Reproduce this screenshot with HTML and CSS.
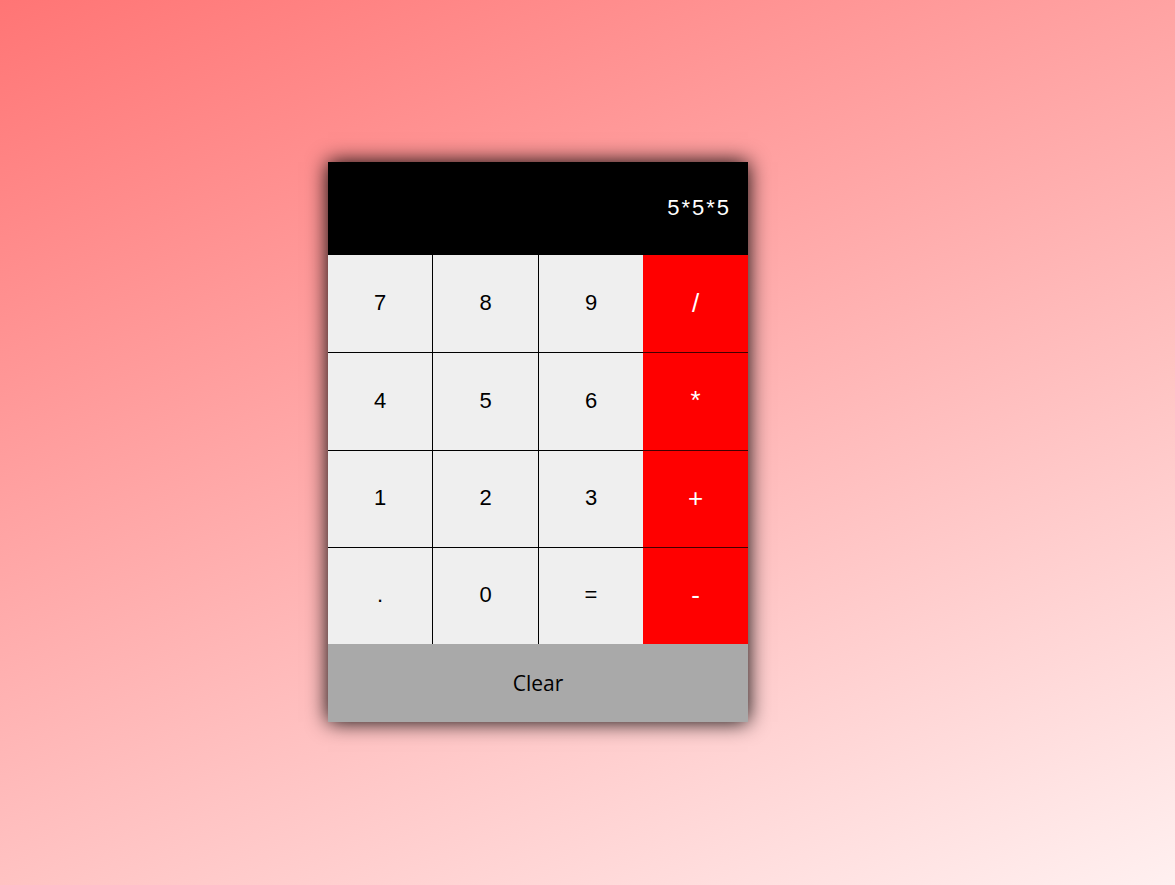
FILE: index.html
```html
<!DOCTYPE html>
<html lang="en">
<head>
<meta charset="utf-8">
<meta name="viewport" content="width=device-width, initial-scale=1">
<title>Calculator</title>
<link rel="stylesheet" href="styles.css">
</head>
<body>
<main class="calculator">
  <input class="display" type="text" value="5*5*5" aria-label="Expression" readonly>
  <div class="keys">
    <button class="key" type="button">7</button>
    <button class="key" type="button">8</button>
    <button class="key" type="button">9</button>
    <button class="key operator" type="button">/</button>
    <button class="key" type="button">4</button>
    <button class="key" type="button">5</button>
    <button class="key" type="button">6</button>
    <button class="key operator" type="button">*</button>
    <button class="key" type="button">1</button>
    <button class="key" type="button">2</button>
    <button class="key" type="button">3</button>
    <button class="key operator" type="button">+</button>
    <button class="key" type="button">.</button>
    <button class="key" type="button">0</button>
    <button class="key" type="button">=</button>
    <button class="key operator" type="button">-</button>
  </div>
  <button class="clear" type="button">Clear</button>
</main>
</body>
</html>
```

FILE: styles.css
```css
* {
  box-sizing: border-box;
}

body {
  margin: 0;
  min-height: 100vh;
  padding: 20px 99px 21px 0;
  display: flex;
  align-items: center;
  justify-content: center;
  background: linear-gradient(156deg, #ff7575, #fff0f0);
  font-family: "Liberation Sans", Arial, sans-serif;
}

.calculator {
  display: flex;
  flex-direction: column;
  width: 100%;
  max-width: 420px;
  box-shadow: 0 0 20px #000;
}

.display {
  width: 100%;
  padding: 33px 17px 34px;
  border: 0;
  outline: 0;
  background: #000;
  color: #fff;
  font: 22px/26px "Liberation Sans", Arial, sans-serif;
  letter-spacing: 2px;
  text-align: right;
}

.keys {
  display: grid;
  grid-template-columns: repeat(4, 1fr);
  grid-auto-rows: 1fr;
  min-height: 389px;
}

.key {
  padding: 16px 16px 17px;
  border: 0 solid #000;
  background: #efefef;
  color: #000;
  font: 22px/26px "Liberation Sans", Arial, sans-serif;
}

.key:nth-child(n + 5) {
  border-top-width: 1px;
}

.key:nth-child(4n + 1) {
  border-right-width: 1px;
}

.key:nth-child(4n + 3) {
  border-left-width: 1px;
}

.operator {
  padding-bottom: 18px;
  border-color: #400;
  background: #f00;
  color: #fff;
  font-size: 26px;
}

.clear {
  padding: 26px 16px;
  border: 0;
  background: #a9a9a9;
  color: #000;
  font: 21px/26px "Open Sans", "Segoe UI", sans-serif;
}
```
